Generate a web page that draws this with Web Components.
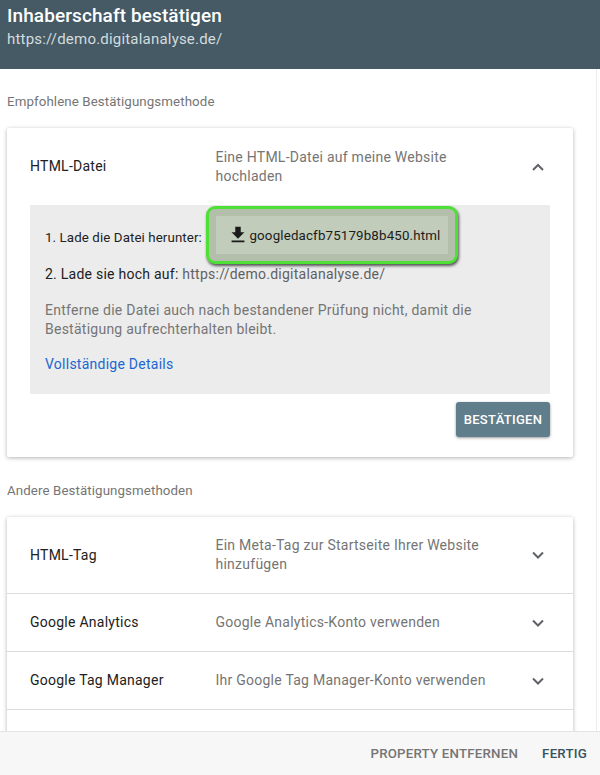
<!DOCTYPE html>
<html lang="de">
<head>
<meta charset="utf-8">
<title>Inhaberschaft bestätigen</title>
<style>
  html, body { margin: 0; height: 775px; overflow: hidden; background: #fff; }
  body { font-family: Roboto, "Liberation Sans", sans-serif; }
</style>
</head>
<body>
<verify-dialog>
  <verify-header slot="header" title="Inhaberschaft bestätigen" url="https://demo.digitalanalyse.de/"></verify-header>

  <section-label>Empfohlene Bestätigungsmethode</section-label>
  <method-card>
    <method-row name="HTML-Datei" open>Eine HTML-Datei auf meine Website hochladen</method-row>
    <file-details></file-details>
  </method-card>

  <section-label class="second">Andere Bestätigungsmethoden</section-label>
  <method-card>
    <method-row name="HTML-Tag">Ein Meta-Tag zur Startseite Ihrer Website hinzufügen</method-row>
    <method-row name="Google Analytics">Google Analytics-Konto verwenden</method-row>
    <method-row name="Google Tag Manager">Ihr Google Tag Manager-Konto verwenden</method-row>
    <method-row name="" blank></method-row>
  </method-card>

  <verify-footer slot="footer"></verify-footer>
</verify-dialog>

<script>
class VerifyDialog extends HTMLElement {
  constructor() {
    super();
    this.attachShadow({ mode: 'open' });
    this.shadowRoot.innerHTML = `
      <style>
        :host {
          display: flex;
          flex-direction: column;
          height: 775px;
          width: 600px;
          overflow: hidden;
        }
        .body {
          flex: 1;
          min-height: 0;
          overflow: hidden;
          padding: 0 23px 0 7px;
          border-right: 1px solid #ececec;
          box-sizing: border-box;
          width: 597px;
        }
        ::slotted(section-label.second) { margin-top: 26px; }
      </style>
      <slot name="header"></slot>
      <div class="body"><slot></slot></div>
      <slot name="footer"></slot>
    `;
  }
}

class VerifyHeader extends HTMLElement {
  constructor() {
    super();
    this.attachShadow({ mode: 'open' });
  }

  connectedCallback() {
    this.shadowRoot.innerHTML = `
      <style>
        :host {
          display: block;
          flex: none;
          height: 69px;
          box-sizing: border-box;
          padding: 5px 7px 0;
          background: #455a64;
        }
        h1 { margin: 0; font-size: 19px; line-height: 22px; font-weight: 500; color: #fff; letter-spacing: .1px; }
        p { margin: 3px 0 0; font-size: 15px; line-height: 18px; color: #d3dbdf; letter-spacing: .2px; }
      </style>
      <h1>${this.getAttribute('title')}</h1>
      <p>${this.getAttribute('url')}</p>
    `;
  }
}

class SectionLabel extends HTMLElement {
  constructor() {
    super();
    this.attachShadow({ mode: 'open' });
    this.shadowRoot.innerHTML = `
      <style>
        :host {
          display: block;
          margin-top: 25px;
          margin-bottom: 18px;
          font-size: 13.3px;
          line-height: 16px;
          color: #757575;
          letter-spacing: .1px;
        }
      </style>
      <slot></slot>
    `;
  }
}

class MethodCard extends HTMLElement {
  constructor() {
    super();
    this.attachShadow({ mode: 'open' });
    this.shadowRoot.innerHTML = `
      <style>
        :host {
          display: block;
          background: #fff;
          border-radius: 2px;
          box-shadow: 0 1px 4px rgba(0, 0, 0, .3);
        }
      </style>
      <slot></slot>
    `;
  }
}

class MethodRow extends HTMLElement {
  constructor() {
    super();
    this.attachShadow({ mode: 'open' });
  }

  connectedCallback() {
    const open = this.hasAttribute('open');
    const blank = this.hasAttribute('blank');
    const chevron = open ? 'M7 15l5-5 5 5' : 'M7 9.5l5 5 5-5';
    this.shadowRoot.innerHTML = `
      <style>
        :host {
          display: grid;
          grid-template-columns: 185.5px 1fr 24px;
          align-items: center;
          min-height: 76px;
          box-sizing: border-box;
          padding: 0 23px;
          border-top: 1px solid #dcdcdc;
        }
        :host(:first-child) { border-top: 0; }
        :host([open]) { min-height: 77px; }
        :host([name="Google Analytics"]), :host([name="Google Tag Manager"]) { min-height: 58px; }
        .name { font-size: 14px; color: #212121; letter-spacing: .25px; margin-top: -1px; }
        .desc { font-size: 14px; line-height: 19px; color: #757575; letter-spacing: .25px; padding-right: 40px; }
        svg { display: block; width: 24px; height: 24px; fill: none; stroke: #5f6368; stroke-width: 2; }
      </style>
      <div class="name">${this.getAttribute('name')}</div>
      <div class="desc"><slot></slot></div>
      ${blank ? '' : `<svg viewBox="0 0 24 24"><path d="${chevron}"/></svg>`}
    `;
  }
}

class FileDetails extends HTMLElement {
  constructor() {
    super();
    this.attachShadow({ mode: 'open' });
    this.shadowRoot.innerHTML = `
      <style>
        :host {
          display: block;
          padding: 0 23px 20px;
          font-size: 14px;
          color: #616161;
          letter-spacing: .25px;
        }
        .panel {
          position: relative;
          background: #ececec;
          height: 189px;
          box-sizing: border-box;
          padding: 24px 15px 0;
        }
        .step { line-height: 18px; }
        .first { color: #212121; font-size: 13.3px; letter-spacing: .1px; }
        .line2 { margin-top: 18px; }
        .line2 b { font-weight: 400; color: #212121; }
        .note { margin-top: 18px; line-height: 19px; color: #757575; }
        a { display: block; margin-top: 16px; color: #1967d2; text-decoration: none; line-height: 18px; }
        .file {
          position: absolute;
          left: 176px;
          top: 1px;
          width: 252px;
          height: 58px;
          box-sizing: border-box;
          display: flex;
          align-items: center;
          justify-content: center;
          padding-left: 4px;
          background: #c1ccba;
          border: 3px solid #4fe037;
          border-radius: 9px;
          box-shadow: 1px 2px 3px rgba(0, 0, 0, .65), inset 0 0 0 7px #b3bfab;
          color: #1b1b1b;
          font-size: 13.3px;
          letter-spacing: .17px;
        }
        .file svg { width: 22px; height: 22px; fill: #1b1b1b; }
        .actions { display: flex; justify-content: flex-end; margin-top: 8px; }
        button {
          width: 94px;
          height: 35px;
          border: 0;
          border-radius: 3px;
          background: #607d8b;
          color: #fff;
          font: 500 13px Roboto, sans-serif;
          letter-spacing: .3px;
          padding: 0;
          box-shadow: 0 1px 3px rgba(0, 0, 0, .4);
        }
      </style>
      <div class="panel">
        <div class="step first">1. Lade die Datei herunter:</div>
        <div class="file">
          <svg viewBox="0 0 24 24"><path d="M19 9h-4V3H9v6H5l7 7 7-7zM5 18v2h14v-2H5z"/></svg>
          <span>googledacfb75179b8b450.html</span>
        </div>
        <div class="step line2"><b>2. Lade sie hoch auf:</b> https://demo.digitalanalyse.de/</div>
        <div class="note">Entferne die Datei auch nach bestandener Prüfung nicht, damit die Bestätigung aufrechterhalten bleibt.</div>
        <a href="#">Vollständige Details</a>
      </div>
      <div class="actions"><button>BESTÄTIGEN</button></div>
    `;
  }
}

class VerifyFooter extends HTMLElement {
  constructor() {
    super();
    this.attachShadow({ mode: 'open' });
    this.shadowRoot.innerHTML = `
      <style>
        :host {
          display: flex;
          flex: none;
          justify-content: flex-end;
          align-items: center;
          gap: 24px;
          height: 43px;
          padding-right: 13px;
          background: #f7f7f7;
          border-top: 1px solid #e4e4e4;
          font-size: 13.3px;
          font-weight: 500;
          letter-spacing: .2px;
          color: #757575;
        }
        .done { color: #37535f; }
      </style>
      <span>PROPERTY ENTFERNEN</span>
      <span class="done">FERTIG</span>
    `;
  }
}

customElements.define('verify-dialog', VerifyDialog);
customElements.define('verify-header', VerifyHeader);
customElements.define('section-label', SectionLabel);
customElements.define('method-card', MethodCard);
customElements.define('method-row', MethodRow);
customElements.define('file-details', FileDetails);
customElements.define('verify-footer', VerifyFooter);
</script>
</body>
</html>
